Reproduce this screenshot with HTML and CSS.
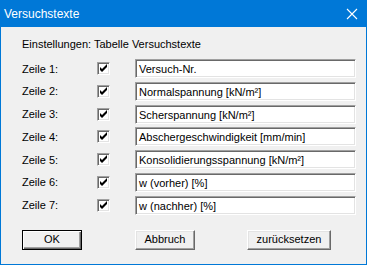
FILE: index.html
```html
<!DOCTYPE html>
<html lang="de">
<head>
  <meta charset="UTF-8" />
  <title>Versuchstexte</title>
  <link rel="stylesheet" href="styles.css">
</head>
<body>

<div class="window">
  <!-- Title bar -->
  <div class="titlebar">
    <span class="title">Versuchstexte</span>
    <svg class="close" width="12" height="12" viewBox="0 0 12 12">
      <path d="M1 1 L11 11 M11 1 L1 11" stroke="#fff" stroke-width="1.1" fill="none"/>
    </svg>
  </div>

  <div class="content">
    <div class="heading">Einstellungen: Tabelle Versuchstexte</div>

    <div class="rows">
      <div class="row">
        <span class="label">Zeile 1:</span>
        <span class="check"><svg width="9" height="9" viewBox="0 0 9 9"><path d="M1 3v3l2 2 5-5V0L3 5z" fill="#000"/></svg></span>
        <div class="field">Versuch-Nr.</div>
      </div>
      <div class="row">
        <span class="label">Zeile 2:</span>
        <span class="check"><svg width="9" height="9" viewBox="0 0 9 9"><path d="M1 3v3l2 2 5-5V0L3 5z" fill="#000"/></svg></span>
        <div class="field">Normalspannung [kN/m²]</div>
      </div>
      <div class="row">
        <span class="label">Zeile 3:</span>
        <span class="check"><svg width="9" height="9" viewBox="0 0 9 9"><path d="M1 3v3l2 2 5-5V0L3 5z" fill="#000"/></svg></span>
        <div class="field">Scherspannung [kN/m²]</div>
      </div>
      <div class="row">
        <span class="label">Zeile 4:</span>
        <span class="check"><svg width="9" height="9" viewBox="0 0 9 9"><path d="M1 3v3l2 2 5-5V0L3 5z" fill="#000"/></svg></span>
        <div class="field">Abschergeschwindigkeit [mm/min]</div>
      </div>
      <div class="row">
        <span class="label">Zeile 5:</span>
        <span class="check"><svg width="9" height="9" viewBox="0 0 9 9"><path d="M1 3v3l2 2 5-5V0L3 5z" fill="#000"/></svg></span>
        <div class="field">Konsolidierungsspannung [kN/m²]</div>
      </div>
      <div class="row">
        <span class="label">Zeile 6:</span>
        <span class="check"><svg width="9" height="9" viewBox="0 0 9 9"><path d="M1 3v3l2 2 5-5V0L3 5z" fill="#000"/></svg></span>
        <div class="field">w (vorher) [%]</div>
      </div>
      <div class="row">
        <span class="label">Zeile 7:</span>
        <span class="check"><svg width="9" height="9" viewBox="0 0 9 9"><path d="M1 3v3l2 2 5-5V0L3 5z" fill="#000"/></svg></span>
        <div class="field">w (nachher) [%]</div>
      </div>
    </div>

    <div class="buttons">
      <div class="btn btn-default">OK</div>
      <div class="btn btn-cancel">Abbruch</div>
      <div class="btn btn-reset">zurücksetzen</div>
    </div>
  </div>
</div>

</body>
</html>
```

FILE: styles.css
```css
body {
  margin: 0;
  padding: 0;
  background: #ffffff;
  font-family: "Liberation Sans", Arial, sans-serif;
  font-size: 11px;
  color: #000;
}
.window {
  width: 367px;
  height: 265px;
  box-sizing: border-box;
  border: 1px solid #0078d7;
  background: #f0f0f0;
}
.titlebar {
  height: 26px;
  margin-top: -1px;
  padding-top: 1px;
  background: #0078d7;
  display: flex;
  align-items: center;
  justify-content: space-between;
}
.title {
  color: #fff;
  font-family: "Liberation Sans", Arial, sans-serif;
  font-size: 12px;
  padding-left: 3px;
}
.close {
  margin-right: 8px;
}
.content {
  padding: 11px 9px 0 21px;
}
.heading {
  line-height: 13px;
}
.rows {
  margin-top: 8px;
  display: flex;
  flex-direction: column;
  gap: 3.75px;
}
.row {
  display: flex;
  align-items: center;
  height: 19px;
}
.label {
  width: 75px;
}
.check {
  width: 13px;
  height: 13px;
  box-sizing: border-box;
  margin-right: 25px;
  background: #fff;
  border-top: 1px solid #a0a0a0;
  border-left: 1px solid #a0a0a0;
  border-right: 1px solid #fff;
  border-bottom: 1px solid #fff;
  box-shadow: inset 1px 1px 0 #696969, inset -1px -1px 0 #e3e3e3;
  display: flex;
  align-items: center;
  justify-content: center;
}
.check svg {
  display: block;
}
.field {
  width: 221px;
  height: 19px;
  box-sizing: border-box;
  background: #fff;
  border-top: 1px solid #a0a0a0;
  border-left: 1px solid #a0a0a0;
  border-right: 1px solid #fff;
  border-bottom: 1px solid #fff;
  box-shadow: inset 1px 1px 0 #696969, inset -1px -1px 0 #e3e3e3;
  padding: 2px 3px;
  line-height: 14px;
  white-space: nowrap;
  overflow: hidden;
}
.buttons {
  margin-top: 15.5px;
  display: flex;
}
.btn {
  height: 20px;
  box-sizing: border-box;
  background: #f0f0f0;
  border-top: 1px solid #fff;
  border-left: 1px solid #fff;
  border-right: 1px solid #696969;
  border-bottom: 1px solid #696969;
  box-shadow: inset -1px -1px 0 #a0a0a0, inset 1px 1px 0 #e3e3e3;
  text-align: center;
  line-height: 17px;
}
.btn-default {
  width: 60px;
  border: 1px solid #000;
  box-shadow: inset 1px 1px 0 #fff, inset -1px -1px 0 #696969, inset -2px -2px 0 #a0a0a0;
}
.btn-cancel {
  width: 60px;
  margin-left: 53px;
}
.btn-reset {
  width: 84px;
  margin-left: 52px;
}
```
